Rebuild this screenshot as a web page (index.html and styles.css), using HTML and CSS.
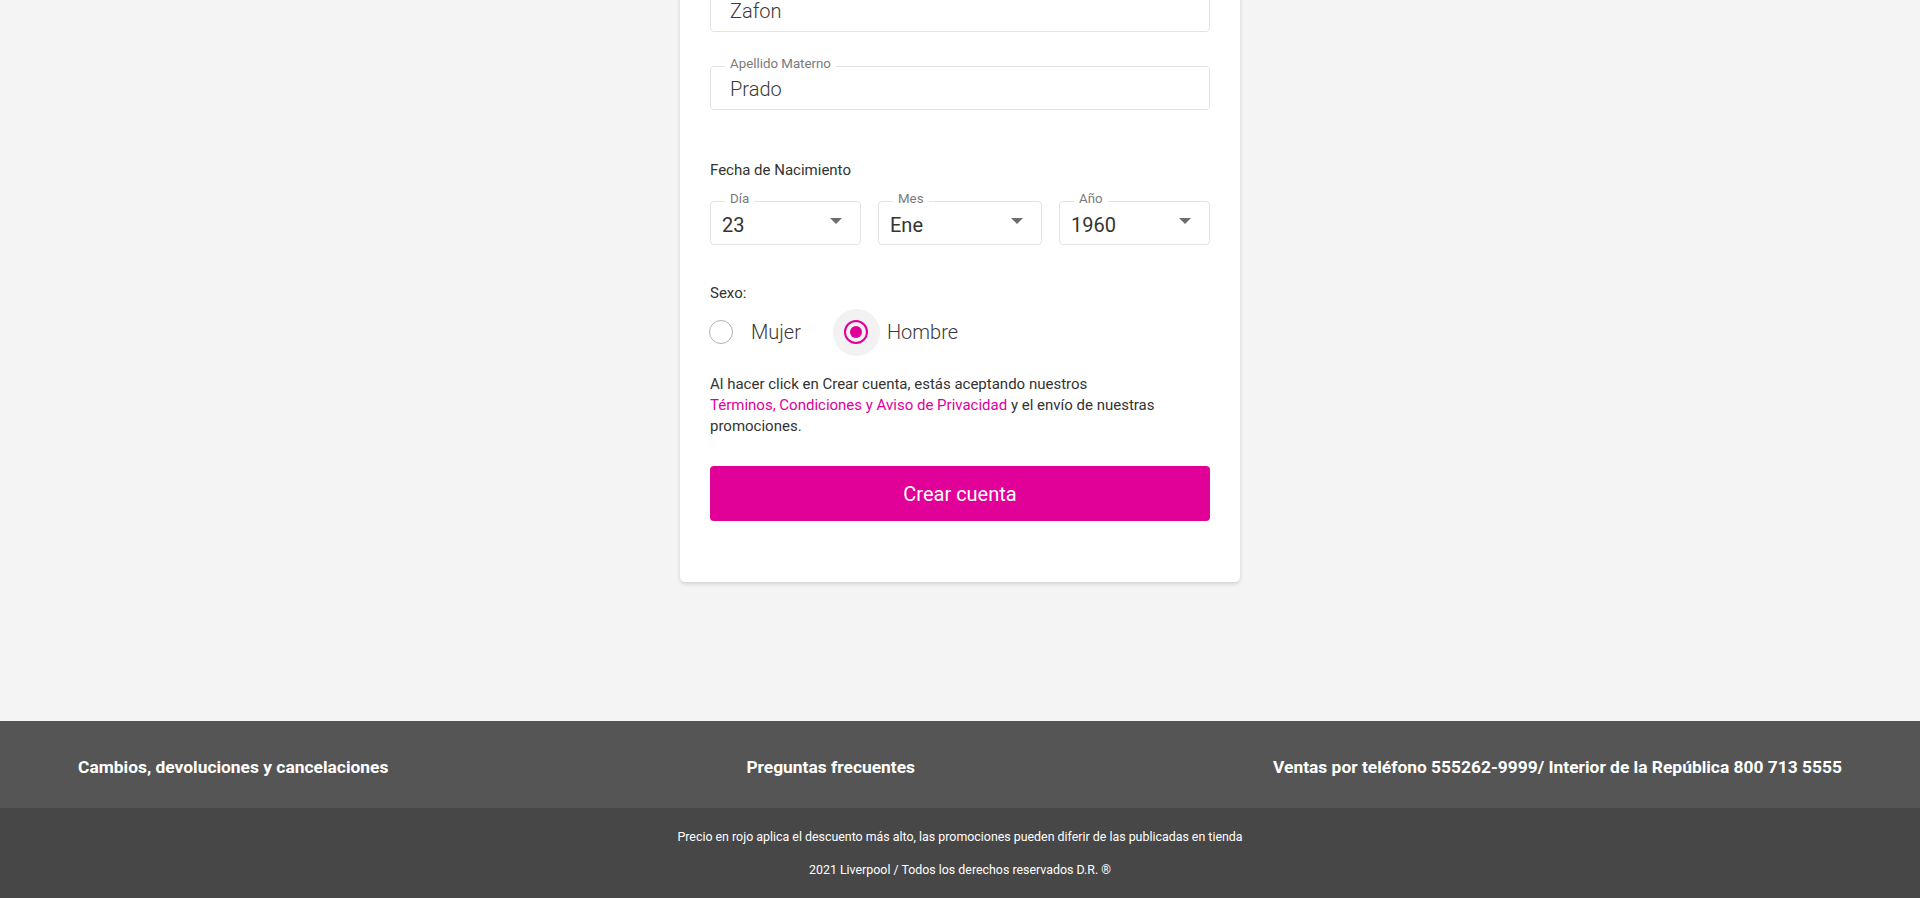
FILE: index.html
```html
<!DOCTYPE html>
<html lang="es">
<head>
<meta charset="utf-8">
<title>Crear cuenta</title>
<link rel="stylesheet" href="styles.css">
</head>
<body>
<main class="page">
  <section class="card">
    <div class="field">
      <span class="field-label">Apellido Paterno</span>
      <span class="field-value">Zafon</span>
    </div>
    <div class="field field-gap">
      <span class="field-label">Apellido Materno</span>
      <span class="field-value">Prado</span>
    </div>

    <p class="group-title birth-title">Fecha de Nacimiento</p>
    <div class="date-row">
      <div class="select">
        <span class="field-label">Día</span>
        <span class="select-value">23</span>
        <span class="caret"></span>
      </div>
      <div class="select">
        <span class="field-label">Mes</span>
        <span class="select-value">Ene</span>
        <span class="caret"></span>
      </div>
      <div class="select">
        <span class="field-label">Año</span>
        <span class="select-value">1960</span>
        <span class="caret"></span>
      </div>
    </div>

    <p class="group-title sex-title">Sexo:</p>
    <div class="radio-row">
      <label class="radio-option option-first">
        <span class="radio-hit"><span class="radio"></span></span>
        <span class="radio-text">Mujer</span>
      </label>
      <label class="radio-option">
        <span class="radio-hit is-focused"><span class="radio is-checked"></span></span>
        <span class="radio-text">Hombre</span>
      </label>
    </div>

    <p class="terms">Al hacer click en Crear cuenta, estás aceptando nuestros<br><a class="terms-link" href="#">Términos, Condiciones y Aviso de Privacidad</a> y el envío de nuestras promociones.</p>

    <button class="submit" type="button">Crear cuenta</button>
  </section>
</main>

<footer class="footer">
  <nav class="footer-links">
    <a class="footer-link" href="#">Cambios, devoluciones y cancelaciones</a>
    <a class="footer-link" href="#">Preguntas frecuentes</a>
    <a class="footer-link" href="#">Ventas por teléfono 555262-9999/ Interior de la República 800 713 5555</a>
  </nav>
  <div class="footer-legal">
    <p class="legal-line">Precio en rojo aplica el descuento más alto, las promociones pueden diferir de las publicadas en tienda</p>
    <p class="legal-line">2021 Liverpool / Todos los derechos reservados D.R. ®</p>
  </div>
</footer>
</body>
</html>
```

FILE: styles.css
```css
* {
  box-sizing: border-box;
}

html, body {
  margin: 0;
  padding: 0;
}

body {
  background: #f4f4f4;
  font-family: Roboto, "Liberation Sans", Arial, sans-serif;
  color: #333333;
  height: 898px;
  overflow: hidden;
}

.page {
  display: flex;
  justify-content: center;
}

.card {
  width: 560px;
  margin-top: -42px;
  margin-bottom: 139px;
  padding: 30px 30px 61px;
  background: #ffffff;
  border-radius: 5px;
  box-shadow: 0 2px 4px rgba(0, 0, 0, 0.14);
  display: flex;
  flex-direction: column;
}

.field {
  position: relative;
  height: 44px;
  border: 1px solid #e3e3e3;
  border-radius: 4px;
  display: flex;
  align-items: center;
  padding: 0 19px;
}

.field-gap {
  margin-top: 34px;
}

.field-label {
  position: absolute;
  top: -11px;
  left: 14px;
  padding: 0 5px;
  background: #ffffff;
  font-size: 13.3px;
  line-height: 16px;
  color: #7a7a7a;
}

.field-value {
  font-size: 20px;
  font-weight: 300;
  color: #3a3a3a;
  padding-top: 1px;
}

.group-title {
  margin: 0;
  font-size: 15px;
  line-height: 20px;
  color: #333333;
}

.birth-title {
  margin-top: 50px;
}

.date-row {
  margin-top: 21px;
  display: grid;
  grid-template-columns: 151px 164px 151px;
  column-gap: 17px;
}

.select {
  position: relative;
  height: 44px;
  border: 1px solid #e3e3e3;
  border-radius: 4px;
  display: flex;
  align-items: center;
  padding: 3px 18px 0 11px;
}

.select-value {
  font-size: 20px;
  color: #333333;
}

.caret {
  margin-left: auto;
  margin-top: -7px;
  width: 0;
  height: 0;
  border-left: 6px solid transparent;
  border-right: 6px solid transparent;
  border-top: 6px solid #6e6e6e;
}

.sex-title {
  margin-top: 38px;
}

.radio-row {
  margin-top: 5px;
  display: flex;
  align-items: center;
  height: 48px;
}

.radio-option {
  display: flex;
  align-items: center;
  cursor: pointer;
}

.option-first {
  margin-left: -13px;
  margin-right: 32px;
}

.radio-hit {
  width: 47px;
  height: 47px;
  border-radius: 50%;
  display: flex;
  align-items: center;
  justify-content: center;
}

.radio-hit.is-focused {
  background: #f2f2f2;
}

.radio {
  width: 24px;
  height: 24px;
  border-radius: 50%;
  border: 1.5px solid #b3b3b3;
  display: flex;
  align-items: center;
  justify-content: center;
}

.radio.is-checked {
  border: 2.5px solid #e10098;
}

.radio.is-checked::after {
  content: "";
  width: 12px;
  height: 12px;
  border-radius: 50%;
  background: #e10098;
}

.radio-text {
  margin-left: 7px;
  font-size: 20px;
  font-weight: 300;
  color: #3a3a3a;
}

.terms {
  margin: 18px 0 0;
  font-size: 15px;
  line-height: 21px;
  color: #333333;
}

.terms-link {
  color: #e10098;
  text-decoration: none;
}

.submit {
  margin-top: 29px;
  height: 55px;
  width: 100%;
  border: none;
  border-radius: 4px;
  background: #e10098;
  color: #ffffff;
  font-family: Roboto, "Liberation Sans", Arial, sans-serif;
  font-size: 20px;
  font-weight: 400;
  cursor: pointer;
}

.footer {
  display: flex;
  flex-direction: column;
}

.footer-links {
  height: 87px;
  background: #555555;
  display: flex;
  align-items: center;
  justify-content: space-between;
  padding: 5px 78px 0;
}

.footer-link {
  color: #ffffff;
  text-decoration: none;
  font-size: 17.4px;
  font-weight: 700;
}

.footer-legal {
  height: 90px;
  background: #474747;
  padding-top: 21px;
  display: flex;
  flex-direction: column;
  align-items: center;
  gap: 17px;
}

.legal-line {
  margin: 0;
  font-size: 12.4px;
  line-height: 16px;
  color: #ffffff;
  font-weight: 400;
}
```
